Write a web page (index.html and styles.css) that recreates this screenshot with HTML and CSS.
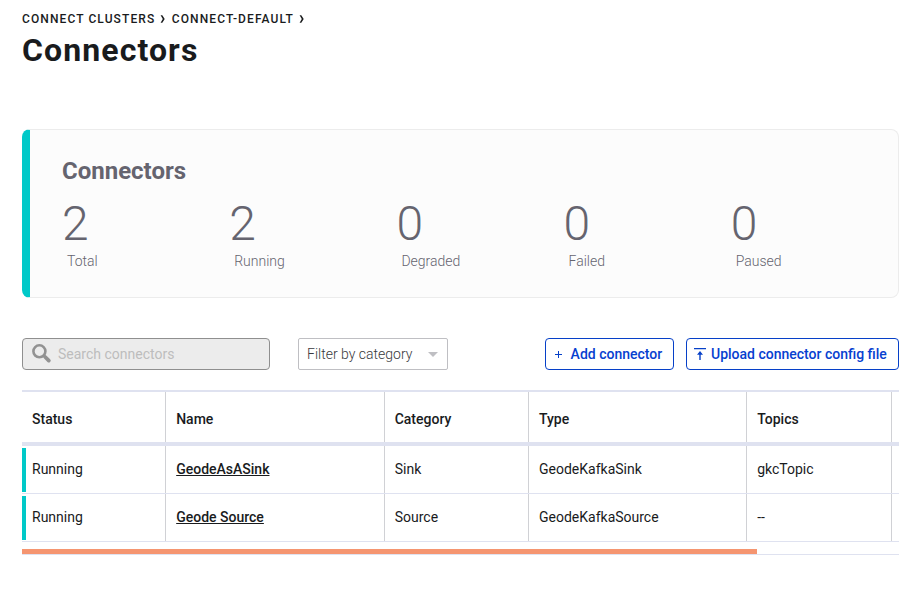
FILE: index.html
```html
<!DOCTYPE html>
<html lang="en">
<head>
<meta charset="utf-8">
<title>Connectors</title>
<link rel="stylesheet" href="styles.css">
</head>
<body>
<main class="page">
  <nav class="crumbs"><span>Connect clusters</span><svg class="chev" viewBox="0 0 5 8"><path d="M.6.3h1.700L4.700 4 2.300 7.700H.6L2.800 4z"/></svg><span>connect-default</span><svg class="chev" viewBox="0 0 5 8"><path d="M.6.3h1.700L4.700 4 2.300 7.700H.6L2.800 4z"/></svg></nav>
  <h1 class="title">Connectors</h1>
  <section class="card">
    <h2 class="card-title">Connectors</h2>
    <div class="stats">
      <div class="stat"><div class="num">2</div><div class="label">Total</div></div>
      <div class="stat"><div class="num">2</div><div class="label">Running</div></div>
      <div class="stat"><div class="num">0</div><div class="label">Degraded</div></div>
      <div class="stat"><div class="num">0</div><div class="label">Failed</div></div>
      <div class="stat"><div class="num">0</div><div class="label">Paused</div></div>
    </div>
  </section>
  <div class="toolbar">
    <div class="search">
      <svg class="search-icon" viewBox="0 0 20 20"><circle cx="7.400" cy="7.300" r="6" fill="none" stroke="#929292" stroke-width="2.600"/><path d="M11.600 11.600l1.600 1.600" stroke="#929292" stroke-width="2.500"/><path d="M13.200 13l3.600 3.600" stroke="#929292" stroke-width="3.800" stroke-linecap="round"/></svg>
      <span>Search connectors</span>
    </div>
    <div class="filter"><span>Filter by category</span><i class="caret"></i></div>
    <button class="btn add"><svg class="plus" viewBox="0 0 7 7"><path d="M3 0h1v3h3v1H4v3H3V4H0V3h3z"/></svg>Add connector</button>
    <button class="btn upload"><svg class="up" viewBox="0 0 12 12"><path d="M0 0h12v1.300H0zM6 3L9 6.700H6.700V12H5.300V6.700H3z"/></svg>Upload connector config file</button>
  </div>
  <div class="table">
    <div class="row head"><div>Status</div><div>Name</div><div>Category</div><div>Type</div><div>Topics</div></div>
    <div class="row"><div class="status">Running</div><div><a>GeodeAsASink</a></div><div>Sink</div><div>GeodeKafkaSink</div><div>gkcTopic</div></div>
    <div class="row"><div class="status">Running</div><div><a>Geode Source</a></div><div>Source</div><div>GeodeKafkaSource</div><div>--</div></div>
  </div>
  <div class="scroll"><div class="thumb"></div></div>
</main>
</body>
</html>
```
FILE: styles.css
```css
* { box-sizing: border-box; }
body { margin: 0; background: #fff; color: #191b1d; font: 14px/20px Roboto, sans-serif; }
.page { width: 921px; padding: 10px 22px 0; }
.crumbs { display: flex; align-items: center; height: 17px; font-size: 12px; font-weight: 500; letter-spacing: 1.100px; text-transform: uppercase; }
.chev { width: 5px; height: 8px; margin: 0 6.500px 0 5px; fill: #191b1d; }
.title { margin: 3px 0 0; height: 40px; font-size: 32px; line-height: 40px; font-weight: 700; letter-spacing: 1.100px; }
.card { height: 169px; margin-top: 59px; padding: 25px 0 0 32px; background: #fcfcfc; border: 1px solid #ececec; border-left: 8px solid #00c9c8; border-radius: 8px; }
.card-title { margin: 0; font-size: 24px; line-height: 32px; font-weight: 700; color: #65646f; }
.stats { display: grid; grid-template-columns: repeat(5, 167.200px); margin-top: 9px; }
.num { height: 55px; font-size: 48px; line-height: 56px; font-weight: 300; color: #65646f; }
.label { padding-left: 5px; line-height: 20px; font-weight: 300; color: #65646f; }
.toolbar { display: flex; height: 32px; margin-top: 40px; }
.search { display: flex; align-items: center; width: 248px; padding-left: 9px; background: #ececec; border: 1px solid #8f8f8f; border-radius: 4px; color: #bdbdbd; }
.search-icon { width: 20px; height: 20px; margin-right: 6px; }
.filter { display: flex; align-items: center; justify-content: space-between; width: 150px; margin-left: 28px; padding: 0 9px 0 8px; border: 1px solid #bfbfc3; border-radius: 2px; color: #38393c; font-weight: 300; }
.caret { border: 5px solid transparent; border-top-color: #bfbfc3; border-bottom: 0; }
.btn { display: flex; align-items: center; padding: 0; background: #fff; border: 1px solid #0640c8; border-radius: 4px; color: #0640d0; font: 500 14px/20px Roboto, sans-serif; white-space: nowrap; }
.btn svg { fill: #0640c8; flex: none; }
.add { width: 129px; margin-left: auto; padding-left: 9px; }
.plus { width: 7px; height: 7px; margin-right: 8.600px; }
.upload { width: 213px; margin-left: 12px; padding-left: 7px; }
.up { width: 12px; height: 12px; margin-right: 5px; }
.table { margin-top: 20px; border-top: 2px solid #dfe2f0; }
.row { display: grid; grid-template-columns: 144px 219px 144px 218px 145px; height: 48px; border-bottom: 1px solid #dfe2f0; }
.row > div { display: flex; align-items: center; padding: 0 0 2px 10px; border-right: 1px solid #d0d1d5; }
.row > div:nth-child(2), .row > div:nth-child(5) { padding-left: 10.200px; }
.row > div:nth-child(3) { padding-left: 9.700px; }
.row.head { height: 54px; border-bottom-width: 4px; font-weight: 500; }
.row.head > div { padding-top: 4px; padding-bottom: 0; }
.row > .status { background: linear-gradient(#00c9c8, #00c9c8) 0 2px / 4px 44px no-repeat; }
.row a { font-weight: 500; text-decoration: underline; }
.scroll { height: 13px; padding-top: 7px; border-bottom: 1px solid #dfe2f0; }
.thumb { width: 735px; height: 5px; background: #f59570; }
```
